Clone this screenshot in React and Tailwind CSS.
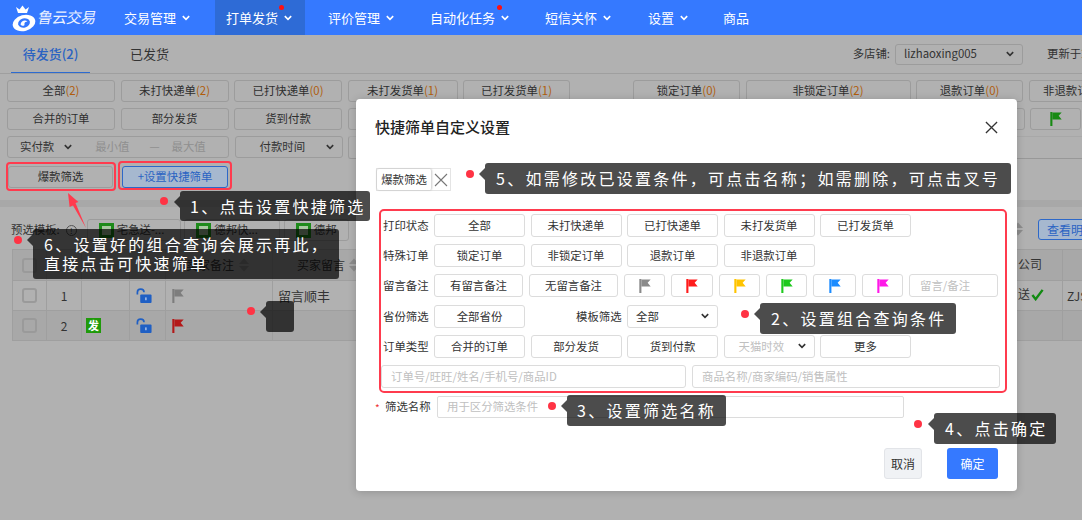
import React from "react";

const F = '[font-family:"Noto_Sans_CJK_SC","Liberation_Sans",sans-serif]';

function Flag({ color, className = "" }) {
  return (
    <svg viewBox="0 0 16 18" className={`w-[14px] h-[16px] ${className}`}>
      <rect x="1.5" y="1" width="2.4" height="16" fill={color} />
      <path d="M3.9 1.5 L14.5 1.5 L11 5.2 L14.5 9.5 L3.9 9.5 Z" fill={color} />
    </svg>
  );
}

function Chevron({ color = "#fff", className = "" }) {
  return (
    <svg viewBox="0 0 10 7" className={`w-[8px] h-[6px] ${className}`} fill="none" stroke={color} strokeWidth="2">
      <path d="M1 1.2 L5 5.2 L9 1.2" />
    </svg>
  );
}

function Sort({ className = "" }) {
  return (
    <svg viewBox="0 0 10 14" className={`w-[10px] h-[14px] ${className}`}>
      <path d="M5 0.5 L10 6 L0 6 Z M5 13.5 L10 8 L0 8 Z" fill="#8c8c8c" />
    </svg>
  );
}

function Lock() {
  return (
    <svg viewBox="0 0 18 18" className="w-[18px] h-[17px]">
      <path d="M2 8 V5.5 C2 1.2 9 1.2 9 5.5" fill="none" stroke="#1f5fc4" strokeWidth="1.8" />
      <rect x="5" y="8" width="12" height="9" rx="1" fill="#1f5fc4" />
      <rect x="10.2" y="11" width="1.6" height="3" fill="#a8c0e8" />
    </svg>
  );
}

function Dot({ className }) {
  return <span className={`absolute w-[8px] h-[8px] rounded-full bg-[#ff3344] ${className}`} />;
}

function Tip({ className, children }) {
  return (
    <div className={`absolute bg-black/70 rounded-[3px] text-white text-[16px] leading-[19px] tracking-[2.25px] whitespace-nowrap flex flex-col justify-center ${className}`}>
      <span className="absolute left-[-6px] top-[5px] w-0 h-0 border-y-[6px] border-y-transparent border-r-[6px] border-r-black/70" />
      {children}
    </div>
  );
}

function NavItem({ label, w, dot, chevron = true, active }) {
  return (
    <div className={`relative h-full flex items-center shrink-0 text-[13px] text-white ${active ? "bg-[#2e6bd6]" : ""} ${w}`}>
      <span>{label}</span>
      {chevron && <Chevron className="ml-[6px]" />}
      {dot}
    </div>
  );
}

function BgBtn({ w, label, n, className = "" }) {
  return (
    <div className={`shrink-0 h-[22px] flex items-center justify-center border border-[#9c9c9c] rounded-[3px] text-[11.4px] text-[#2e2e2e] ${w} ${className}`}>
      {label}
      {n !== undefined && <span className="text-[#b05d0c]">({n})</span>}
    </div>
  );
}

function MBtn({ w = "w-[91px]", children, className = "" }) {
  return (
    <div className={`shrink-0 h-[23px] flex items-center justify-center border border-[#dcdcdc] rounded-[3px] text-[11.4px] text-[#333] ${w} ${className}`}>
      {children}
    </div>
  );
}

function Row({ label, children, mt = "mt-[7.2px]" }) {
  return (
    <div className={`flex items-center h-[23px] ${mt}`}>
      <div className="w-[53px] shrink-0 text-[11.4px] text-[#333] pl-[2px]">{label}</div>
      {children}
    </div>
  );
}

function TemplateChip({ w, label }) {
  return (
    <div className={`shrink-0 h-[22px] flex items-center border border-[#9c9c9c] rounded-[3px] pl-[11px] gap-[3px] text-[11.4px] text-[#333] ${w}`}>
      <span className="w-[15px] h-[15px] bg-[#1d8a1a] flex items-center justify-center">
        <span className="w-[9px] h-[9px] bg-[#a8c8a0]" />
      </span>
      {label}
    </div>
  );
}

function Check() {
  return <span className="w-[15px] h-[15px] border-2 border-[#9a9a9a] rounded-[3px]" />;
}

export default function App() {
  return (
    <div className={`relative w-[1082px] h-[520px] overflow-hidden bg-[#b1b1b1] ${F}`}>
      {/* Header */}
      <header className="h-[35px] bg-[#3579ff] flex items-center">
        <div className="w-[124px] h-full shrink-0 flex items-center pl-[11px]">
          <svg viewBox="0 0 26 30" className="w-[26px] h-[30px]">
            <path d="M5 4 L7 10 L16 10 L18 4 L14.5 6.5 L11.5 2.5 L8.5 6.5 Z" fill="#fff" />
            <ellipse cx="13" cy="20" rx="11.5" ry="8" transform="rotate(-15 13 20)" fill="#fff" />
            <ellipse cx="13" cy="20" rx="6" ry="4.6" transform="rotate(-15 13 20)" fill="#3579ff" />
            <path d="M9.5 21.5 C10 18 14 16.5 16.5 18.5 C14.5 18.5 13 19.5 13.5 21.5 C13.8 22.8 11 23.5 9.5 21.5 Z" fill="#fff" />
          </svg>
          <span className="ml-[1px] text-white text-[15px] tracking-[-0.5px] -skew-x-12 opacity-90">鲁云交易</span>
        </div>
        <NavItem label="交易管理" w="w-[91px]" />
        <NavItem
          label="打单发货"
          w="w-[90px] pl-[11px]"
          active
          dot={<span className="absolute left-[64px] top-[5px] w-[5px] h-[5px] rounded-full bg-[#ff1010]" />}
        />
        <NavItem label="评价管理" w="w-[102px] pl-[23px]" />
        <NavItem
          label="自动化任务"
          w="w-[115px] pl-[23px]"
          dot={<span className="absolute left-[90px] top-[5px] w-[5px] h-[5px] rounded-full bg-[#ff1010]" />}
        />
        <NavItem label="短信关怀" w="w-[103px] pl-[23px]" />
        <NavItem label="设置" w="w-[75px] pl-[23px]" />
        <NavItem label="商品" w="w-[80px] pl-[23px]" chevron={false} />
      </header>

      {/* Tabs */}
      <div className="relative h-[39px] border-b border-[#9f9f9f] flex text-[13px]">
        <div className="ml-[11px] w-[79px] h-[38px] border-b border-[#2d6bd0] flex items-center justify-center font-medium text-[#2a63c2]">待发货(2)</div>
        <div className="ml-[40px] h-[38px] flex items-center text-[#333]">已发货</div>
        <div className="ml-auto flex items-center h-[38px] text-[11.4px] text-[#333]">
          <span className="mr-[5px]">多店铺:</span>
          <div className="w-[128px] h-[21px] border border-[#9c9c9c] rounded-[3px] flex items-center justify-between px-[8px]">
            <span>lizhaoxing005</span>
            <Chevron color="#333" />
          </div>
          <span className="ml-[24px] w-[35px] overflow-hidden whitespace-nowrap">更新于2</span>
        </div>
      </div>

      {/* Filter rows */}
      <div className="pl-[7px] pt-[6px] flex flex-col gap-[6px]">
        <div className="flex gap-[5.5px] whitespace-nowrap">
          <BgBtn w="w-[108px]" label="全部" n={2} />
          <BgBtn w="w-[108px]" label="未打快递单" n={2} />
          <BgBtn w="w-[108px]" label="已打快递单" n={0} />
          <BgBtn w="w-[110px]" label="未打发货单" n={1} />
          <BgBtn w="w-[107px]" label="已打发货单" n={1} />
          <BgBtn w="w-[107px]" label="锁定订单" n={0} className="ml-[57.5px]" />
          <BgBtn w="w-[165px]" label="非锁定订单" n={2} />
          <BgBtn w="w-[107px]" label="退款订单" n={0} />
          <BgBtn w="w-[100px]" label="非退款订单" n={0} />
        </div>
        <div className="flex gap-[5.5px] whitespace-nowrap">
          <BgBtn w="w-[108px]" label="合并的订单" />
          <BgBtn w="w-[108px]" label="部分发货" />
          <BgBtn w="w-[108px]" label="货到付款" />
          <BgBtn w="w-[677px]" label="" />
          <div className="shrink-0 w-[51px] h-[22px] border border-[#9c9c9c] rounded-[3px] flex items-center pl-[18px]">
            <Flag color="#178a12" />
          </div>
        </div>
        <div className="flex gap-[5.5px] whitespace-nowrap">
          <div className="shrink-0 w-[222px] h-[22px] border border-[#9c9c9c] rounded-[3px] flex items-center text-[11.4px] text-[#333] pl-[12px]">
            实付款
            <Chevron color="#333" className="ml-[10px]" />
            <span className="ml-[23px] text-[#8f8f8f]">最小值</span>
            <span className="ml-[20px] text-[#8f8f8f]">—</span>
            <span className="ml-[12px] text-[#8f8f8f]">最大值</span>
          </div>
          <div className="shrink-0 w-[108px] h-[22px] border border-[#9c9c9c] rounded-[3px] flex items-center justify-between pl-[24px] pr-[8px] text-[11.4px] text-[#333]">
            付款时间
            <Chevron color="#333" />
          </div>
          <div className="shrink-0 w-[740px] h-[23px] border-l border-y border-l-[#9c9c9c] border-t-[#a8a8a8] border-b-[#989898] rounded-l-[3px]" />
        </div>
        <div className="flex whitespace-nowrap mt-[1px]">
          <BgBtn w="w-[105px]" label="爆款筛选" className="ml-[1px] !h-[22px]" />
          <BgBtn w="w-[106px]" label="+设置快捷筛单" className="ml-[9px] !h-[22px] !border-[#2d68c8] !text-[#2a63c2] bg-[#a6b8cf]" />
        </div>
      </div>

      {/* Grey band */}
      <div className="h-[7px] mt-[12px] bg-[#a8a8a8]" />

      {/* Template row */}
      <div className="flex items-center h-[22px] mt-[12px] pl-[11px] whitespace-nowrap text-[11.4px] text-[#333]">
        <span>预选模板:</span>
        <span className="ml-[6px] w-[11px] h-[11px] rounded-full border border-[#555] text-[8px] leading-[9px] text-center">!</span>
        <div className="flex gap-[3.5px] ml-[10px]">
          <TemplateChip w="w-[94px]" label="宅急送-..." />
          <TemplateChip w="w-[96px]" label="德邦快..." />
          <TemplateChip w="w-[65px]" label="德邦" />
        </div>
        <Sort className="absolute left-[1013px] top-[222px]" />
        <div className="absolute left-[1038px] top-[219px] w-[60px] h-[21px] border border-[#2d68c8] rounded-[3px] bg-[#a6b8cf] text-[#2a63c2] flex items-center pl-[8px] text-[12px]">查看明细</div>
      </div>

      {/* Table */}
      <div className="ml-[12px] mt-[8px] w-[1070px] text-[12px] text-[#333] border-t border-l border-[#9f9f9f]">
        <div className="flex h-[31px] bg-[#a8a8a8] border-b border-[#9f9f9f]">
          <div className="w-[34px] flex items-center justify-center border-r border-[#9f9f9f]"><Check /></div>
          <div className="w-[35px] border-r border-[#9f9f9f]" />
          <div className="w-[48px] border-r border-[#9f9f9f]" />
          <div className="w-[36px] border-r border-[#9f9f9f]" />
          <div className="w-[107px] border-r border-[#9f9f9f] flex items-center pl-[20px] whitespace-nowrap">卖家备注<Sort className="ml-[5px]" /></div>
          <div className="flex-1 flex items-center pl-[24px] whitespace-nowrap">买家留言<Sort className="ml-[4px]" /></div>
          <div className="w-[20px] border-l border-[#9f9f9f]" />
        </div>
        <div className="flex h-[30px] border-b border-[#9f9f9f]">
          <div className="w-[34px] flex items-center justify-center border-r border-[#9f9f9f]"><Check /></div>
          <div className="w-[35px] border-r border-[#9f9f9f] flex items-center justify-center">1</div>
          <div className="w-[48px] border-r border-[#9f9f9f]" />
          <div className="w-[36px] border-r border-[#9f9f9f] flex items-center pl-[5px]"><Lock /></div>
          <div className="w-[107px] border-r border-[#9f9f9f] flex items-center pl-[5px]"><Flag color="#7d7d7d" /></div>
          <div className="flex-1 flex items-center pl-[5px] text-[13px]">留言顺丰</div>
          <div className="w-[20px] border-l border-[#9f9f9f] flex items-center pl-[4px] overflow-hidden whitespace-nowrap">ZJS</div>
        </div>
        <div className="flex h-[30px] bg-[#a8a8a8] border-b border-[#9f9f9f]">
          <div className="w-[34px] flex items-center justify-center border-r border-[#9f9f9f]"><Check /></div>
          <div className="w-[35px] border-r border-[#9f9f9f] flex items-center justify-center">2</div>
          <div className="w-[48px] border-r border-[#9f9f9f] flex items-center pl-[4px]">
            <span className="w-[15px] h-[15px] bg-[#1f9a0a] text-white text-[11px] leading-[15px] text-center font-bold">发</span>
          </div>
          <div className="w-[36px] border-r border-[#9f9f9f] flex items-center pl-[5px]"><Lock /></div>
          <div className="w-[107px] border-r border-[#9f9f9f] flex items-center pl-[5px]"><Flag color="#b31818" /></div>
          <div className="flex-1" />
          <div className="w-[20px] border-l border-[#9f9f9f]" />
        </div>
      </div>

      {/* Right table cells beside the modal */}
      <div className="absolute left-[1018px] top-[255px] text-[12px] text-[#333]">公司</div>
      <div className="absolute left-[1018px] top-[285px] flex items-center text-[12px] text-[#333]">
        送
        <svg viewBox="0 0 14 14" className="w-[13px] h-[13px] ml-[1px]">
          <path d="M1.5 7.5 L5 12 L12.5 2" fill="none" stroke="#128a12" strokeWidth="2.6" />
        </svg>
      </div>

      {/* Highlights on background */}
      <div className="absolute left-[6px] top-[162px] w-[110px] h-[29px] border-[2px] border-[#ff3b4e] rounded-[4px]" />
      <div className="absolute left-[118px] top-[161px] w-[114px] h-[29px] border-[2px] border-[#ff3b4e] rounded-[4px]" />

      {/* Arrow */}
      <svg className="absolute left-[60px] top-[188px] w-[32px] h-[42px]" viewBox="0 0 32 42">
        <path d="M8 5 L18.4 14.1 L15.5 14.9 L26 40 L13 17.5 L9.6 18.9 Z" fill="#ff3b4e" />
      </svg>

      {/* Modal */}
      <div className="absolute left-[356px] top-[99px] w-[661px] h-[392px] bg-white rounded-[4px] shadow-[0_1px_8px_rgba(0,0,0,0.18)]">
        <div className="flex items-center justify-between h-[56px] pl-[19px] pr-[19px]">
          <h2 className="text-[15px] font-medium text-[#222]">快捷筛单自定义设置</h2>
          <svg viewBox="0 0 14 14" className="w-[13px] h-[13px]" fill="none" stroke="#333" strokeWidth="1.4">
            <path d="M1 1 L13 13 M13 1 L1 13" />
          </svg>
        </div>
        <div className="flex mt-[13px] ml-[20px] h-[23px] w-[75px] border border-[#e4e4e4]">
          <div className="w-[55px] h-full border-r border-[#dcdcdc] rounded-[2px] shadow-[0_0_2px_rgba(0,0,0,0.25)] flex items-center justify-center text-[11.4px] text-[#333] whitespace-nowrap">爆款筛选</div>
          <div className="flex-1 flex items-center justify-center">
            <svg viewBox="0 0 14 14" className="w-[14px] h-[14px]" fill="none" stroke="#777" strokeWidth="1.1">
              <path d="M1 1 L13 13 M13 1 L1 13" />
            </svg>
          </div>
        </div>

        <div className="mt-[18px] ml-[23px] w-[628px] h-[184px] border-[2px] border-[#ff3b4e] rounded-[5px] pt-[3px] whitespace-nowrap">
          <Row label="打印状态" mt="mt-0">
            <div className="flex gap-[5.5px]">
              <MBtn>全部</MBtn>
              <MBtn>未打快递单</MBtn>
              <MBtn>已打快递单</MBtn>
              <MBtn>未打发货单</MBtn>
              <MBtn>已打发货单</MBtn>
            </div>
          </Row>
          <Row label="特殊订单">
            <div className="flex gap-[5.5px]">
              <MBtn>锁定订单</MBtn>
              <MBtn>非锁定订单</MBtn>
              <MBtn>退款订单</MBtn>
              <MBtn>非退款订单</MBtn>
            </div>
          </Row>
          <Row label="留言备注">
            <div className="flex gap-[6px]">
              <MBtn w="w-[89px]">有留言备注</MBtn>
              <MBtn w="w-[89px]">无留言备注</MBtn>
              <MBtn w="w-[41px]"><Flag color="#8a8a8a" /></MBtn>
              <MBtn w="w-[42px]"><Flag color="#ff1c1c" /></MBtn>
              <MBtn w="w-[41px]"><Flag color="#ffc400" /></MBtn>
              <MBtn w="w-[41px]"><Flag color="#1fc91f" /></MBtn>
              <MBtn w="w-[43px]"><Flag color="#1c8cff" /></MBtn>
              <MBtn w="w-[41px]"><Flag color="#ff19e8" /></MBtn>
              <MBtn w="w-[89px]" className="!justify-start pl-[10px] !text-[#c0c0c0]">留言/备注</MBtn>
            </div>
          </Row>
          <Row label="省份筛选">
            <MBtn>全部省份</MBtn>
            <span className="ml-[51px] w-[51px] text-[11.4px] text-[#333]">模板筛选</span>
            <MBtn className="!justify-between px-[8px]">
              全部
              <Chevron color="#333" />
            </MBtn>
          </Row>
          <Row label="订单类型">
            <div className="flex gap-[5.5px]">
              <MBtn>合并的订单</MBtn>
              <MBtn>部分发货</MBtn>
              <MBtn>货到付款</MBtn>
              <MBtn className="!justify-between pl-[14px] pr-[8px] !text-[#c0c0c0]">
                天猫时效
                <Chevron color="#333" />
              </MBtn>
              <MBtn>更多</MBtn>
            </div>
          </Row>
          <div className="flex gap-[6px] mt-[7.2px]">
            <div className="w-[305px] h-[23px] border border-[#dcdcdc] rounded-[3px] flex items-center pl-[9px] text-[11.4px] text-[#c0c0c0]">订单号/旺旺/姓名/手机号/商品ID</div>
            <div className="w-[308px] h-[23px] border border-[#dcdcdc] rounded-[3px] flex items-center pl-[9px] text-[11.4px] text-[#c0c0c0]">商品名称/商家编码/销售属性</div>
          </div>
        </div>

        <div className="flex items-center mt-[3px] ml-[19px] h-[22px] text-[11.4px] text-[#333]">
          <span className="text-[#e33] w-[10px] text-[10px]">*</span>
          <span className="w-[52px]">筛选名称</span>
          <div className="w-[467px] h-[22px] border border-[#dcdcdc] rounded-[2px] flex items-center pl-[9px] text-[#c0c0c0]">用于区分筛选条件</div>
        </div>

        <div className="flex justify-end gap-[25px] mt-[30px] mr-[19px]">
          <div className="w-[38px] h-[31px] bg-[#f0f2f5] border border-[#e2e4e8] rounded-[3px] flex items-center justify-center text-[12px] text-[#333]">取消</div>
          <div className="w-[51px] h-[31px] bg-[#3579ff] rounded-[3px] flex items-center justify-center text-[12px] text-white">确定</div>
        </div>
      </div>

      {/* Tooltips */}
      <Dot className="left-[160px] top-[197px]" />
      <Tip className="left-[180px] top-[191px] w-[190px] h-[30px] pl-[10px]">1、点击设置快捷筛选</Tip>

      <Dot className="left-[14px] top-[236px]" />
      <Tip className="left-[33px] top-[229px] w-[306px] h-[50px] pl-[11px]">
        <span>6、设置好的组合查询会展示再此，</span>
        <span>直接点击可快速筛单</span>
      </Tip>

      <Dot className="left-[247px] top-[307px]" />
      <Tip className="left-[266px] top-[301px] w-[28px] h-[31px]" />

      <Dot className="left-[466px] top-[170px]" />
      <Tip className="left-[485px] top-[163px] w-[526px] h-[31px] pl-[11px]">5、如需修改已设置条件，可点击名称；如需删除，可点击叉号</Tip>

      <Dot className="left-[741px] top-[310px]" />
      <Tip className="left-[760px] top-[303px] w-[196px] h-[31px] pl-[11px]">2、设置组合查询条件</Tip>

      <Dot className="left-[548px] top-[402px]" />
      <Tip className="left-[567px] top-[395px] w-[159px] h-[31px] pl-[10px]">3、设置筛选名称</Tip>

      <Dot className="left-[914px] top-[420px]" />
      <Tip className="left-[934px] top-[413px] w-[122px] h-[31px] pl-[11px]">4、点击确定</Tip>
    </div>
  );
}
